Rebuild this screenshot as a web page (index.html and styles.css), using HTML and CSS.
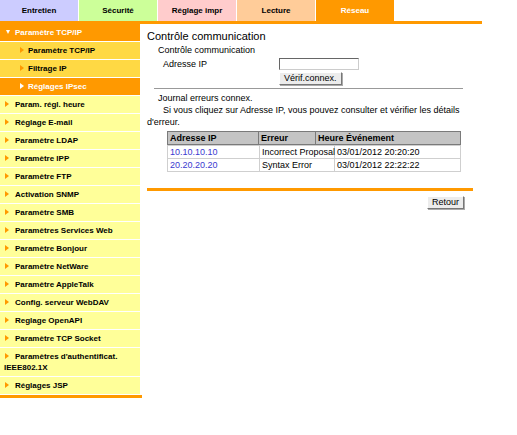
FILE: index.html
```html
<!DOCTYPE html>
<html lang="fr">
<head>
  <meta charset="UTF-8">
  <title>Contrôle communication</title>
  <link rel="stylesheet" href="styles.css">
</head>
<body>
  <div class="tabs">
    <div class="tab tab-entretien">Entretien</div>
    <div class="tab tab-securite">Sécurité</div>
    <div class="tab tab-impr">Réglage impr</div>
    <div class="tab tab-lecture">Lecture</div>
    <div class="tab tab-reseau">Réseau</div>
  </div>
  <div class="tabline"></div>

  <div class="layout">
    <!-- Menu de gauche -->
    <div class="menu">
      <div class="menu-item menu-open">Paramètre TCP/IP</div>
      <div class="menu-item menu-sub">Paramètre TCP/IP</div>
      <div class="menu-item menu-sub">Filtrage IP</div>
      <div class="menu-item menu-sub menu-current">Réglages IPsec</div>
      <div class="menu-item">Param. régl. heure</div>
      <div class="menu-item">Réglage E-mail</div>
      <div class="menu-item">Paramètre LDAP</div>
      <div class="menu-item">Paramètre IPP</div>
      <div class="menu-item">Paramètre FTP</div>
      <div class="menu-item">Activation SNMP</div>
      <div class="menu-item">Paramètre SMB</div>
      <div class="menu-item">Paramètres Services Web</div>
      <div class="menu-item">Paramètre Bonjour</div>
      <div class="menu-item">Paramètre NetWare</div>
      <div class="menu-item">Paramètre AppleTalk</div>
      <div class="menu-item">Config. serveur WebDAV</div>
      <div class="menu-item">Reglage OpenAPI</div>
      <div class="menu-item">Paramètre TCP Socket</div>
      <div class="menu-item">Paramètres d'authentificat. IEEE802.1X</div>
      <div class="menu-item">Réglages JSP</div>
      <div class="menu-end"></div>
    </div>

    <!-- Contenu -->
    <div class="content">
      <h1 class="title">Contrôle communication</h1>
      <div class="section-label">Contrôle communication</div>
      <div class="field-row">
        <span class="field-label">Adresse IP</span>
        <input class="field-input" type="text">
      </div>
      <div class="button-row">
        <button class="btn">Vérif.connex.</button>
      </div>
      <div class="separator"></div>

      <div class="section-label log-title">Journal erreurs connex.</div>
      <p class="log-text">Si vous cliquez sur Adresse IP, vous pouvez consulter et vérifier les détails d'erreur.</p>

      <div class="log">
        <table class="log-head">
          <tr>
            <th class="col-ip">Adresse IP</th>
            <th class="col-err">Erreur</th>
            <th class="col-time">Heure Événement</th>
          </tr>
        </table>
        <table class="log-body">
          <tr>
            <td class="cell-ip"><a href="#">10.10.10.10</a></td>
            <td class="cell-err">Incorrect Proposal</td>
            <td class="cell-time">03/01/2012 20:20:20</td>
          </tr>
          <tr>
            <td class="cell-ip"><a href="#">20.20.20.20</a></td>
            <td class="cell-err">Syntax Error</td>
            <td class="cell-time">03/01/2012 22:22:22</td>
          </tr>
        </table>
      </div>

      <div class="footer-line"></div>
      <div class="footer">
        <button class="btn">Retour</button>
      </div>
    </div>
  </div>
</body>
</html>
```

FILE: styles.css
```css
body {
  margin: 0;
  background: #fff;
  color: #000;
  font-family: "Liberation Sans", Arial, sans-serif;
  font-size: 9px;
}

/* Onglets du haut */
.tabs {
  display: flex;
  gap: 1px;
  height: 21px;
}

.tab {
  width: 78px;
  display: flex;
  align-items: center;
  justify-content: center;
  font-size: 8px;
  font-weight: bold;
}

.tab-entretien { background: #ccccff; }
.tab-securite { background: #ccff99; }
.tab-impr { background: #ffcccc; }
.tab-lecture { background: #ffcc99; }
.tab-reseau { background: #ff9900; color: #fff; }

.tabline {
  width: 482px;
  height: 3px;
  background: #ff9900;
}

.layout {
  display: flex;
  align-items: flex-start;
}

/* Menu */
.menu {
  width: 140px;
  flex: none;
}

.menu-item {
  background: #ffff99;
  border-bottom: 1px solid #fff;
  padding: 3px 2px 3px 4px;
  line-height: 11px;
  font-size: 8px;
  font-weight: bold;
}

.menu-item::before {
  content: "";
  display: inline-block;
  width: 0;
  height: 0;
  border-left: 4px solid #ff9900;
  border-top: 3px solid transparent;
  border-bottom: 3px solid transparent;
  margin: 0 6px 0 1px;
  vertical-align: 0;
}

.menu-open {
  background: #ff9900;
  color: #fff;
  padding-left: 5px;
}

.menu-open::before {
  border-left: 2.5px solid transparent;
  border-right: 2.5px solid transparent;
  border-top: 4px solid #fff;
  border-bottom: 0;
  margin: 0 5px 0 1px;
  vertical-align: 1px;
}

.menu-sub {
  background: #ffd944;
  padding-left: 19px;
}

.menu-sub::before {
  margin-right: 4px;
}

.menu-current {
  background: #ff9900;
  color: #fff;
}

.menu-current::before {
  border-left-color: #fff;
}

.menu-end {
  width: 142px;
  height: 3px;
  background: #ff9900;
}

/* Contenu */
.content {
  width: 326px;
  margin-left: 7px;
  padding-top: 6px;
}

.title {
  margin: 0;
  font-size: 11px;
  font-weight: normal;
  line-height: 13px;
}

.section-label {
  padding-left: 11px;
  line-height: 12px;
  margin-top: 1px;
}

.field-row {
  display: flex;
  align-items: center;
  height: 12px;
  margin-top: 2px;
  padding-left: 16px;
}

.field-label {
  width: 116px;
}

.field-input {
  width: 80px;
  height: 12px;
  box-sizing: border-box;
  margin: 0;
  padding: 0 2px;
  border: 1px solid;
  border-color: #666 #ccc #ccc #666;
  font-size: 9px;
}

.button-row {
  margin-top: 2px;
  padding-left: 132px;
  height: 13px;
}

.btn {
  height: 13px;
  margin: 0;
  padding: 0 4px;
  font-family: "Liberation Sans", Arial, sans-serif;
  font-size: 9px;
  line-height: 11px;
  color: #000;
  background: #ececec;
  border: 1px solid;
  border-color: #fff #777 #777 #fff;
  box-shadow: 1px 1px 0 #aaa;
}

.separator {
  width: 309px;
  height: 1px;
  margin: 3px 0 0 7px;
  background: #999;
}

.log-title {
  margin-top: 3px;
}

.log-text {
  margin: 0;
  line-height: 12px;
  text-indent: 16px;
}

.log {
  margin: 3px 0 0 20px;
  width: 293px;
}

.log table {
  border-collapse: collapse;
  width: 293px;
  table-layout: fixed;
}

.log th,
.log td {
  box-sizing: border-box;
  padding: 0 2px;
  height: 13px;
  line-height: 12px;
  text-align: left;
  font-size: 9px;
  white-space: nowrap;
}

.log-head th {
  background: #c4c4c4;
  border: 1px solid #7a7a7a;
}

.col-ip { width: 91px; }
.col-err { width: 57px; }
.col-time { width: 145px; }

.log-body td {
  border: 1px solid #cfcfcf;
}

.cell-ip { width: 92px; padding-left: 4px; }
.cell-err { width: 75px; padding: 0 0 0 2px; }
.cell-time { width: 126px; padding-left: 2px; }

.cell-ip a {
  color: #3a3ad0;
  text-decoration: none;
}

.footer-line {
  width: 326px;
  height: 3px;
  margin-top: 16px;
  background: #ff9900;
}

.footer {
  display: flex;
  justify-content: flex-end;
  padding-right: 9px;
  margin-top: 5px;
}
```
